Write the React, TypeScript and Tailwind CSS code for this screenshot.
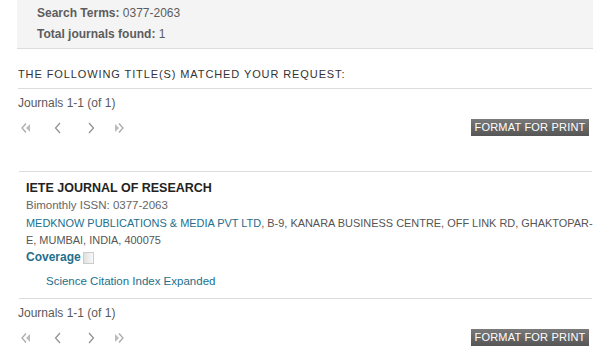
import React from "react";

const Arrows = () => (
  <div className="flex items-center h-[16px]">
    <svg width="12" height="12" viewBox="0 0 12 12" className="ml-[20px]">
      <path d="M6 1.5 L2 6 L6 10.5" fill="none" stroke="#aaa" strokeWidth="1.3" />
      <path d="M10 2 L6 6 L10 10 Z" fill="#bbb" />
    </svg>
    <svg width="12" height="12" viewBox="0 0 12 12" className="ml-[20px]">
      <path d="M8 1 L3.5 6 L8 11" fill="none" stroke="#8f8f8f" strokeWidth="1.2" />
    </svg>
    <svg width="12" height="12" viewBox="0 0 12 12" className="ml-[21px]">
      <path d="M4 1 L8.5 6 L4 11" fill="none" stroke="#8f8f8f" strokeWidth="1.2" />
    </svg>
    <svg width="12" height="12" viewBox="0 0 12 12" className="ml-[16px]">
      <path d="M2 2 L6 6 L2 10 Z" fill="#bbb" />
      <path d="M6 1.5 L10 6 L6 10.5" fill="none" stroke="#aaa" strokeWidth="1.3" />
    </svg>
  </div>
);

const Pager = () => (
  <div className="flex flex-col">
    <div className="pl-[18px] h-[17px] leading-[17px] text-[12px] text-[#5a5a5a]">Journals 1-1 (of 1)</div>
    <div className="flex items-center justify-between mt-[7px] pr-[11px]">
      <Arrows />
      <div className="w-[118px] h-[17px] bg-gradient-to-b from-[#7a7a7a] to-[#555] text-white text-[11px] leading-[17px] text-center tracking-[0.2px]">
        FORMAT FOR PRINT
      </div>
    </div>
  </div>
);

export default function App() {
  return (
    <div
      className="w-[600px] h-[352px] overflow-hidden bg-white"
      style={{ fontFamily: '"Liberation Sans", Arial, sans-serif' }}
    >
      <div className="ml-[17px] mr-[7px] h-[49px] bg-[#f4f4f4] border-b border-[#dcdcdc] pl-[20px] pt-[4px] text-[12px] font-bold text-[#5c5c5c]">
        <div className="h-[21px] leading-[18px]">
          Search Terms: <span className="font-normal">0377-2063</span>
        </div>
        <div className="h-[21px] leading-[18px]">
          Total journals found: <span className="font-normal">1</span>
        </div>
      </div>
      <div className="h-[40px] ml-[18px] mr-[8px] border-b border-[#dcdcdc] flex items-center pt-[12px] text-[11px] tracking-[0.9px] text-[#333]">
        THE FOLLOWING TITLE(S) MATCHED YOUR REQUEST:
      </div>
      <div className="pt-[6px]">
        <Pager />
      </div>
      <div className="mt-[35px] ml-[19px] mr-[8px] border-b border-[#dcdcdc]" />
      <div className="pl-[26px] pr-[4px] pt-[8px] text-[12px] leading-[17px]">
        <div className="font-bold text-[#222] text-[12.5px]">IETE JOURNAL OF RESEARCH</div>
        <div className="text-[#666] text-[11.5px]">Bimonthly ISSN: 0377-2063</div>
        <div className="text-[#555] text-[10.95px] whitespace-nowrap mt-[1px]">
          <span className="text-[#236f8c]">MEDKNOW PUBLICATIONS &amp; MEDIA PVT LTD</span>, B-9, KANARA BUSINESS CENTRE, OFF LINK RD, GHAKTOPAR-
          <br />
          E, MUMBAI, INDIA, 400075
        </div>
        <div className="flex items-center font-bold text-[#236f8c]">
          Coverage
          <span className="ml-[2px] w-[11px] h-[12px] border border-[#ccc] bg-gradient-to-r from-[#e0e0e0] to-[#f8f8f8]" />
        </div>
        <div className="pl-[20px] mt-[7px] text-[#236f8c] text-[11.5px]">Science Citation Index Expanded</div>
      </div>
      <div className="mt-[8px] ml-[19px] mr-[8px] border-b border-[#dcdcdc]" />
      <div className="pt-[6px]">
        <Pager />
      </div>
    </div>
  );
}
